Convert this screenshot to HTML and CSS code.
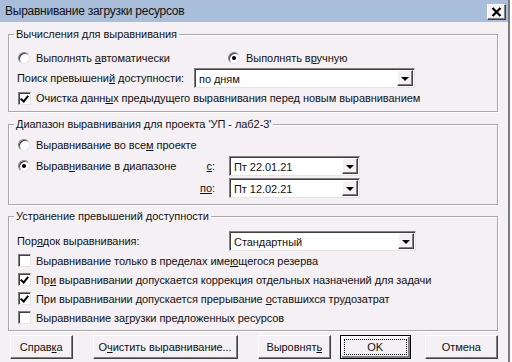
FILE: index.html
```html
<!DOCTYPE html>
<html lang="ru">
<head>
<meta charset="utf-8">
<title>Выравнивание загрузки ресурсов</title>
<link rel="stylesheet" href="styles.css">
</head>
<body>
<div class="screen">
  <div class="dialog">
    <div class="titlebar">
      <span class="title">Выравнивание загрузки ресурсов</span>
      <span class="close"><svg width="11" height="10" viewBox="0 0 11 10"><path d="M1.5 1 L9.5 9 M9.5 1 L1.5 9" stroke="#000" stroke-width="2.2" fill="none"/></svg></span>
    </div>
    <div class="content">
      <fieldset class="group g1">
        <legend>Вычисления для выравнивания</legend>
        <div class="row">
          <label class="opt first"><span class="radio"></span><span class="txt">Выполнять <u>а</u>втоматически</span></label>
          <label class="opt"><span class="radio on"></span><span class="txt">Выполнять в<u>р</u>учную</span></label>
        </div>
        <div class="row">
          <span class="lbl search">Поиск превышени<u>й</u> доступности:</span>
          <div class="select s-days"><span class="val">по дням</span><span class="arrow"></span></div>
        </div>
        <div class="row">
          <label class="opt"><span class="check on"></span><span class="txt">Очистка данн<u>ы</u>х предыдущего выравнивания перед новым выравниванием</span></label>
        </div>
      </fieldset>

      <fieldset class="group g2">
        <legend>Диапазон выравнивания для проекта 'УП - лаб2-3'</legend>
        <div class="row">
          <label class="opt"><span class="radio"></span><span class="txt">Выравнивание во все<u>м</u> проекте</span></label>
        </div>
        <div class="row r22">
          <label class="opt range"><span class="radio on"></span><span class="txt">Вырав<u>н</u>ивание в диапазоне</span></label>
          <span class="lbl date-lbl"><u>с</u>:</span>
          <div class="select s-date"><span class="val">Пт 22.01.21</span><span class="arrow"></span></div>
        </div>
        <div class="row r22">
          <span class="spacer"></span>
          <span class="lbl date-lbl"><u>по</u>:</span>
          <div class="select s-date"><span class="val">Пт 12.02.21</span><span class="arrow"></span></div>
        </div>
      </fieldset>

      <fieldset class="group g3">
        <legend>Устранение превышений доступности</legend>
        <div class="row">
          <span class="lbl order">Пор<u>я</u>док выравнивания:</span>
          <div class="select s-order"><span class="val">Стандартный</span><span class="arrow"></span></div>
        </div>
        <div class="row r19">
          <label class="opt"><span class="check"></span><span class="txt">Выравнивание только в пределах име<u>ю</u>щегося резерва</span></label>
        </div>
        <div class="row r19">
          <label class="opt"><span class="check on"></span><span class="txt">Пр<u>и</u> выравнивании допускается коррекция отдельных назначений для задачи</span></label>
        </div>
        <div class="row r19">
          <label class="opt"><span class="check on"></span><span class="txt">При выравнивании допускается прерывание <u>о</u>ставшихся трудозатрат</span></label>
        </div>
        <div class="row r19">
          <label class="opt"><span class="check"></span><span class="txt">Выравнивание за<u>г</u>рузки предложенных ресурсов</span></label>
        </div>
      </fieldset>

      <div class="buttons">
        <span class="btn b-help"><span class="txt">Справ<u>к</u>а</span></span>
        <span class="btn b-clear"><span class="txt">О<u>ч</u>истить выравнивание...</span></span>
        <span class="btn b-level"><span class="txt">Выровнят<u>ь</u></span></span>
        <span class="btn b-ok default"><span class="focus">OK</span></span>
        <span class="btn b-cancel"><span class="txt">Отмена</span></span>
      </div>
    </div>
  </div>
  <div class="behind"></div>
</div>
</body>
</html>
```

FILE: styles.css
```css
* { box-sizing: border-box; }
html, body { margin: 0; padding: 0; }
body {
  width: 512px;
  height: 362px;
  overflow: hidden;
  background: #ffffff;
  font-family: "Liberation Sans", Arial, sans-serif;
  font-size: 11px;
  letter-spacing: -0.05px;
  color: #111;
}
u { text-decoration: underline; text-underline-offset: 1px; }

.screen { display: flex; height: 362px; }
.dialog {
  width: 510px;
  height: 362px;
  background: #f4f0f4;
  border-right: 2px solid #7c7c7c;
  display: flex;
  flex-direction: column;
}
.behind { flex: 1; background: #fff; }

.titlebar {
  height: 22px;
  flex: none;
  background: #a8bedb;
  display: flex;
  align-items: center;
  padding: 0 2px 0 5px;
  font-size: 12px;
  letter-spacing: -0.25px;
}
.title { flex: 1; }
.close {
  width: 19px;
  height: 16px;
  margin-top: 1px;
  background: #f4f0f4;
  border: 1px solid;
  border-color: #fff #404040 #404040 #fff;
  box-shadow: inset -1px -1px 0 #808080;
  display: flex;
  align-items: center;
  justify-content: center;
}

.content { padding: 5px 10px 0 8px; }

.group {
  margin: 0;
  padding: 0 8px;
  border: 1px solid #a8a8a8;
  box-shadow: 1px 1px 0 #fff, inset 1px 1px 0 #fff;
  min-width: 0;
}
.group legend {
  padding: 0 2px;
  margin-left: -3px;
  line-height: 14px;
}
.g1 { padding-top: 7px; padding-bottom: 3px; }
.g2 { margin-top: 5px; padding-top: 4px; padding-bottom: 5px; }
.g3 { margin-top: 4px; padding-top: 8px; padding-bottom: 3px; }

.row { display: flex; align-items: center; height: 20px; }
.r22 { height: 22px; }
.r19 { height: 19px; }

.opt { display: flex; align-items: center; white-space: nowrap; }
.opt.first { width: 210px; }
.opt.range { width: 163px; }
.spacer { width: 163px; }
.txt { white-space: pre; }

.radio {
  width: 12px;
  height: 12px;
  margin: 0 6px 0 1px;
  border-radius: 50%;
  background: #fff;
  border: 1px solid;
  border-color: #808080 #e4e4e4 #e4e4e4 #808080;
  box-shadow: inset 1px 1px 0 #404040;
  display: flex;
  align-items: center;
  justify-content: center;
  flex: none;
}
.radio.on::after {
  content: "";
  width: 4px;
  height: 4px;
  border-radius: 50%;
  background: #000;
}
.check {
  width: 13px;
  height: 13px;
  margin: 0 5px 0 1px;
  background: #fff;
  border: 1px solid;
  border-color: #808080 #e4e4e4 #e4e4e4 #808080;
  box-shadow: inset 1px 1px 0 #404040;
  position: relative;
  flex: none;
}
.check.on::after {
  content: "";
  position: absolute;
  left: 3px;
  top: 1px;
  width: 3px;
  height: 6px;
  border: solid #000;
  border-width: 0 2px 2px 0;
  transform: rotate(40deg);
}

.lbl { white-space: nowrap; }
.search { width: 177px; }
.order { width: 212px; }
.date-lbl { width: 49px; text-align: right; padding-right: 14px; }

.select {
  height: 20px;
  background: #fff;
  border: 1px solid;
  border-color: #808080 #e4e4e4 #e4e4e4 #808080;
  box-shadow: inset 1px 1px 0 #404040;
  display: flex;
  align-items: center;
  padding: 1px 1px 1px 4px;
}
.select .val { flex: 1; padding-top: 1px; }
.s-days { width: 221px; }
.s-date { width: 131px; }
.s-order { width: 187px; }
.arrow {
  width: 16px;
  height: 16px;
  background: #f4f0f4;
  border: 1px solid;
  border-color: #fff #404040 #404040 #fff;
  box-shadow: inset -1px -1px 0 #808080;
  display: flex;
  align-items: center;
  justify-content: center;
}
.arrow::after {
  content: "";
  border-left: 4px solid transparent;
  border-right: 4px solid transparent;
  border-top: 4px solid #000;
  margin-top: 1px;
}

.buttons { display: flex; margin-top: 4px; padding-left: 2px; }
.btn {
  height: 24px;
  background: #f4f0f4;
  border: 1px solid;
  border-color: #fff #404040 #404040 #fff;
  box-shadow: inset -1px -1px 0 #808080;
  display: flex;
  align-items: center;
  justify-content: center;
  white-space: nowrap;
}
.b-help { width: 63px; }
.b-clear { width: 146px; margin-left: 20px; }
.b-level { width: 74px; margin-left: 20px; }
.b-ok { width: 71px; margin-left: 9px; }
.b-cancel { width: 74px; margin-left: 14px; }
.btn.default {
  border: 1px solid #000;
  box-shadow: inset 1px 1px 0 #fff, inset -2px -2px 0 #808080;
  padding: 3px;
}
.focus {
  width: 100%;
  height: 100%;
  border: 1px dotted #000;
  display: flex;
  align-items: center;
  justify-content: center;
}
```
